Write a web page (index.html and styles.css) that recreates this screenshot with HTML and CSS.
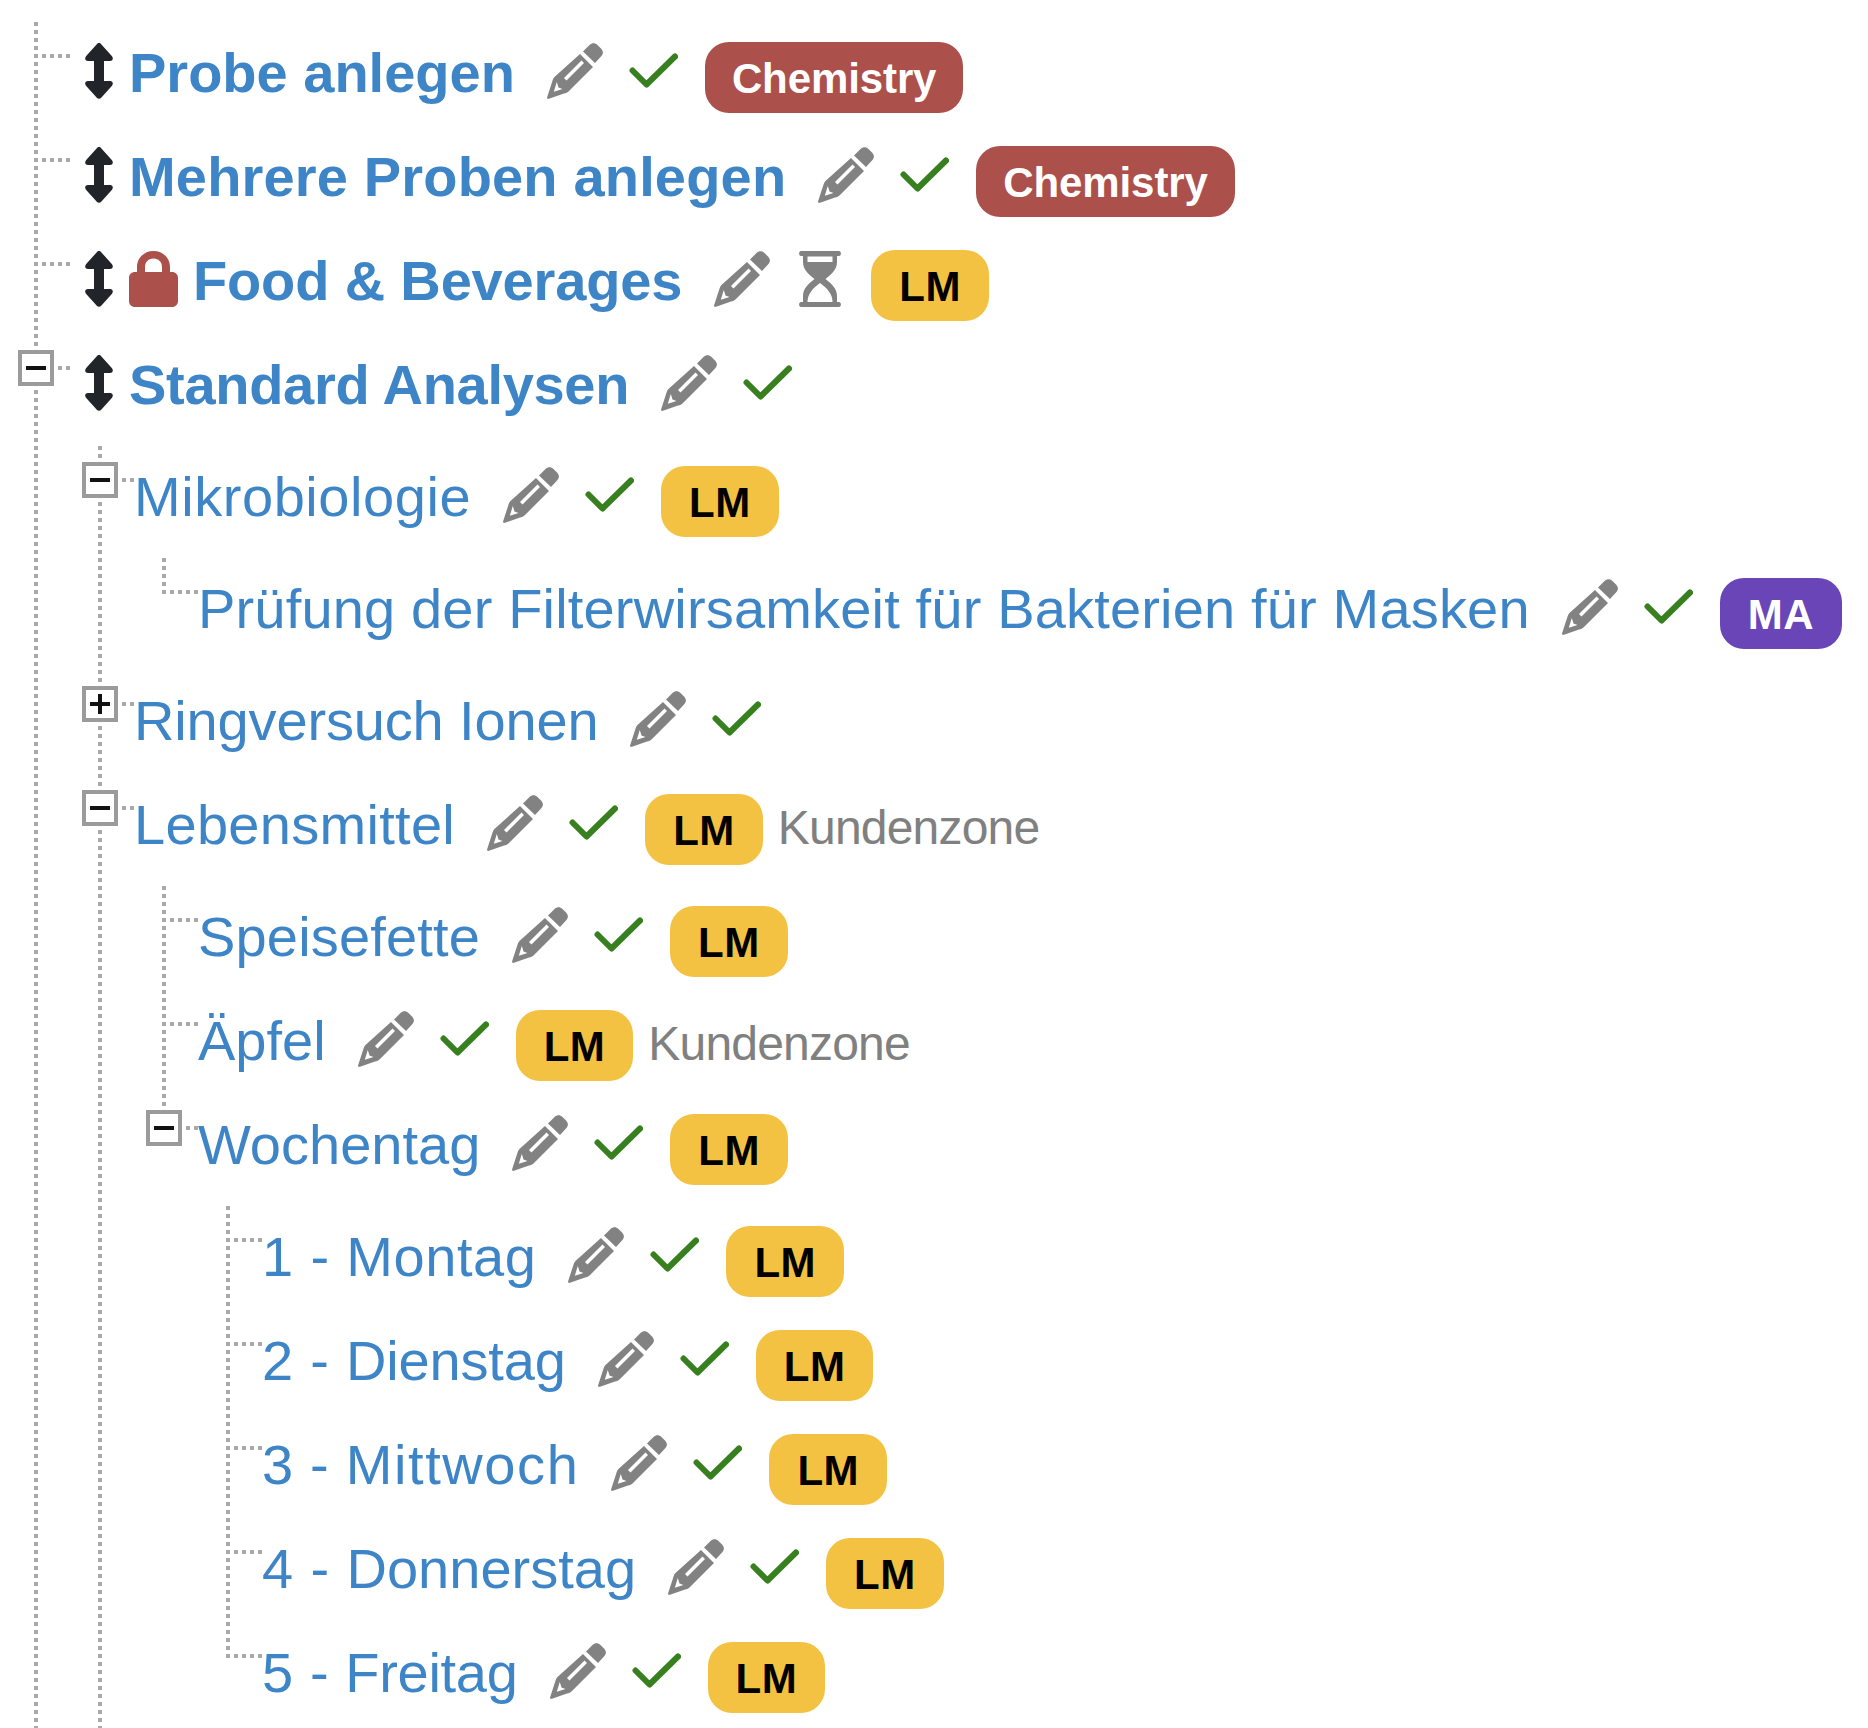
FILE: index.html
```html
<!DOCTYPE html>
<html lang="en">
<head>
  <meta charset="UTF-8" />
  <title>Analysen</title>
  <link rel="stylesheet" href="styles.css">
</head>
<body>
  <svg class="defs" aria-hidden="true">
    <symbol id="i-move" viewBox="0 0 28 56">
      <path d="M14 0C15 0 15.6.6 16.2 1.2L26.8 13C28.6 15 28 18 25 18H19V38H25C28 38 28.6 41 26.8 43L16.2 54.800C15 56.200 13 56.200 11.800 54.800L1.200 43C-.6 41 0 38 3 38H9V18H3C0 18-.6 15 1.200 13L11.800 1.200C12.400.6 13 0 14 0Z"/>
    </symbol>
    <symbol id="i-edit" viewBox="0 0 56 56">
      <path fill-rule="evenodd" d="M33 11 46 24 22 48C20.500 49.500 19 50 17 50.600L2 55.800C.5 56.300-.3 55.500.2 54L5.400 38C6 36 6.500 35 8 33.500ZM34.500 17.500 17 35 19.500 37.500 37 20ZM9.800 39 6.800 48.800 15.500 46 11.500 44.500Z"/>
      <path d="M36 8.500 42.500 2C45-.5 48-.5 50.500 2L54 5.500C56.500 8 56.500 11 54 13.500L48 20Z"/>
    </symbol>
    <symbol id="i-check" viewBox="0 0 49 35">
      <path fill="none" stroke="currentColor" stroke-width="6" stroke-linecap="round" stroke-linejoin="round" d="M3.500 17.500 17.500 31.500 46 3.500"/>
    </symbol>
    <symbol id="i-lock" viewBox="0 0 49 56">
      <path fill-rule="evenodd" d="M8 21V16C8 7 15 0 24.500 0S41 7 41 16V21H43C46.500 21 49 23.500 49 27V50C49 53.500 46.500 56 43 56H6C2.500 56 0 53.500 0 50V27C0 23.500 2.500 21 6 21ZM16 21H33V16C33 11 29.500 7.500 24.500 7.500S16 11 16 16Z"/>
    </symbol>
    <symbol id="i-wait" viewBox="0 0 42 56">
      <path fill-rule="evenodd" d="M2 0H40C42.500 0 42.500 5 40 5H38V11C38 18 33 23 26.500 28 33 33 38 38 38 45V51H40C42.500 51 42.500 56 40 56H2C-.5 56-.5 51 2 51H4V45C4 38 9 33 15.500 28 9 23 4 18 4 11V5H2C-.5 5-.5 0 2 0ZM8.500 5.500V11H33.500V5.500ZM21 32C14 37 8.500 43 8.500 51H33.500C33.500 43 28 37 21 32Z"/>
    </symbol>
  </svg>

  <ul class="tree">
    <li>
      <div class="row strong">
        <svg class="ic-move"><use href="#i-move"/></svg>
        <a class="title">Probe anlegen</a>
        <svg class="ic-edit"><use href="#i-edit"/></svg>
        <svg class="ic-check"><use href="#i-check"/></svg>
        <span class="badge chem">Chemistry</span>
      </div>
    </li>
    <li>
      <div class="row strong">
        <svg class="ic-move"><use href="#i-move"/></svg>
        <a class="title ls-p1">Mehrere Proben anlegen</a>
        <svg class="ic-edit"><use href="#i-edit"/></svg>
        <svg class="ic-check"><use href="#i-check"/></svg>
        <span class="badge chem">Chemistry</span>
      </div>
    </li>
    <li>
      <div class="row strong">
        <svg class="ic-move"><use href="#i-move"/></svg>
        <svg class="ic-lock"><use href="#i-lock"/></svg>
        <a class="title ls-m1">Food &amp; Beverages</a>
        <svg class="ic-edit"><use href="#i-edit"/></svg>
        <svg class="ic-wait"><use href="#i-wait"/></svg>
        <span class="badge lm">LM</span>
      </div>
    </li>
    <li>
      <span class="toggle minus"></span>
      <div class="row strong">
        <svg class="ic-move"><use href="#i-move"/></svg>
        <a class="title ls-m3">Standard Analysen</a>
        <svg class="ic-edit"><use href="#i-edit"/></svg>
        <svg class="ic-check"><use href="#i-check"/></svg>
      </div>
      <ul>
        <li>
          <span class="toggle minus"></span>
          <div class="row">
            <a class="title ls-p5">Mikrobiologie</a>
            <svg class="ic-edit"><use href="#i-edit"/></svg>
            <svg class="ic-check"><use href="#i-check"/></svg>
            <span class="badge lm">LM</span>
          </div>
          <ul>
            <li class="last">
              <div class="row">
                <a class="title ls-p1">Prüfung der Filterwirsamkeit für Bakterien für Masken</a>
                <svg class="ic-edit"><use href="#i-edit"/></svg>
                <svg class="ic-check"><use href="#i-check"/></svg>
                <span class="badge ma">MA</span>
              </div>
            </li>
          </ul>
        </li>
        <li>
          <span class="toggle plus"></span>
          <div class="row">
            <a class="title ls-m1">Ringversuch Ionen</a>
            <svg class="ic-edit"><use href="#i-edit"/></svg>
            <svg class="ic-check"><use href="#i-check"/></svg>
          </div>
        </li>
        <li>
          <span class="toggle minus"></span>
          <div class="row">
            <a class="title ls-p3">Lebensmittel</a>
            <svg class="ic-edit"><use href="#i-edit"/></svg>
            <svg class="ic-check"><use href="#i-check"/></svg>
            <span class="badge lm">LM</span>
            <span class="note">Kundenzone</span>
          </div>
          <ul>
            <li>
              <div class="row">
                <a class="title ls-p1">Speisefette</a>
                <svg class="ic-edit"><use href="#i-edit"/></svg>
                <svg class="ic-check"><use href="#i-check"/></svg>
                <span class="badge lm">LM</span>
              </div>
            </li>
            <li>
              <div class="row">
                <a class="title">Äpfel</a>
                <svg class="ic-edit"><use href="#i-edit"/></svg>
                <svg class="ic-check"><use href="#i-check"/></svg>
                <span class="badge lm">LM</span>
                <span class="note">Kundenzone</span>
              </div>
            </li>
            <li class="last">
              <span class="toggle minus"></span>
              <div class="row">
                <a class="title">Wochentag</a>
                <svg class="ic-edit"><use href="#i-edit"/></svg>
                <svg class="ic-check"><use href="#i-check"/></svg>
                <span class="badge lm">LM</span>
              </div>
              <ul>
                <li>
                  <div class="row">
                    <a class="title day mon">1 - Montag</a>
                    <svg class="ic-edit"><use href="#i-edit"/></svg>
                    <svg class="ic-check"><use href="#i-check"/></svg>
                    <span class="badge lm">LM</span>
                  </div>
                </li>
                <li>
                  <div class="row">
                    <a class="title day ls-m1">2 - Dienstag</a>
                    <svg class="ic-edit"><use href="#i-edit"/></svg>
                    <svg class="ic-check"><use href="#i-check"/></svg>
                    <span class="badge lm">LM</span>
                  </div>
                </li>
                <li>
                  <div class="row">
                    <a class="title day wed">3 - Mittwoch</a>
                    <svg class="ic-edit"><use href="#i-edit"/></svg>
                    <svg class="ic-check"><use href="#i-check"/></svg>
                    <span class="badge lm">LM</span>
                  </div>
                </li>
                <li>
                  <div class="row">
                    <a class="title day">4 - Donnerstag</a>
                    <svg class="ic-edit"><use href="#i-edit"/></svg>
                    <svg class="ic-check"><use href="#i-check"/></svg>
                    <span class="badge lm">LM</span>
                  </div>
                </li>
                <li class="last">
                  <div class="row">
                    <a class="title day ls-m3">5 - Freitag</a>
                    <svg class="ic-edit"><use href="#i-edit"/></svg>
                    <svg class="ic-check"><use href="#i-check"/></svg>
                    <span class="badge lm">LM</span>
                  </div>
                </li>
              </ul>
            </li>
          </ul>
        </li>
      </ul>
    </li>
  </ul>
</body>
</html>
```

FILE: styles.css
```css
html, body {
  margin: 0;
  height: 1728px;
  overflow: hidden;
  background: #fff;
  font-family: "Liberation Sans", Arial, sans-serif;
}

.defs {
  display: none;
}

ul {
  list-style: none;
  margin: 0;
  padding: 8px 0 8px 64px;
}

.tree {
  padding: 22px 0 0 0;
}

/* dotted connector: vertical part, then the stub to the row */
li {
  position: relative;
  background-image:
    repeating-linear-gradient(to bottom, #a9a9a9 0 4px, transparent 4px 8px),
    repeating-linear-gradient(to right, #a9a9a9 0 4px, transparent 4px 8px);
  background-size: 4px 100%, 36px 4px;
  background-position: 34px 0, 34px 32px;
  background-repeat: no-repeat;
}

li.last {
  background-size: 4px 36px, 36px 4px;
}

.row {
  display: flex;
  align-items: flex-start;
  height: 104px;
  padding-left: 70px;
  font-size: 56px;
  line-height: 101px;
  white-space: nowrap;
}

.row.strong {
  padding-left: 85px;
  font-weight: 700;
}

.title {
  color: #3d85c6;
}

.strong .title {
  margin-left: 1px;
}

.day { word-spacing: 1.8px; }
.ls-m3 { letter-spacing: -0.3px; }
.ls-m1 { letter-spacing: -0.15px; }
.ls-p1 { letter-spacing: 0.17px; }
.ls-p3 { letter-spacing: 0.3px; }
.ls-p5 { letter-spacing: 0.55px; }
.mon { letter-spacing: 0.55px; word-spacing: 0.6px; }
.wed { letter-spacing: 1.6px; word-spacing: -1.8px; }

.ic-move {
  width: 28px;
  height: 56px;
  margin: 21px 15px 0 0;
  fill: #212529;
}

.ic-lock {
  width: 49px;
  height: 56px;
  margin: 21px 14px 0 1px;
  fill: #ac504c;
}

.ic-edit {
  width: 56px;
  height: 56px;
  margin: 21px 26px 0 32px;
  fill: #828282;
}

.ic-check {
  width: 49px;
  height: 35px;
  margin: 31px 27px 0 0;
  color: #38801f;
}

.ic-wait {
  width: 42px;
  height: 56px;
  margin: 21px 30px 0 3px;
  fill: #828282;
}

.badge {
  margin-top: 20px;
  padding: 16px 28px 13px;
  border-radius: 24px;
  font-size: 42px;
  font-weight: 700;
  line-height: 42px;
}

.chem {
  padding-left: 27px;
  padding-right: 27px;
  background: #ac504c;
  color: #fff;
  letter-spacing: -0.1px;
}

.lm {
  background: #f4c242;
  color: #000;
  letter-spacing: 0.5px;
}

.ma {
  background: #6a45b8;
  color: #fff;
  letter-spacing: 0.5px;
}

.note {
  margin: 3px 0 0 15px;
  color: #808080;
  font-size: 48px;
  letter-spacing: -0.8px;
}

/* expand / collapse box sits on top of the connector */
.toggle {
  position: absolute;
  left: 18px;
  top: 16px;
  box-sizing: border-box;
  width: 36px;
  height: 36px;
  border: 4px solid #9b9b9b;
  background: #fff;
}

.toggle::before,
.plus::after {
  content: "";
  position: absolute;
  left: 4px;
  top: 12px;
  width: 20px;
  height: 4px;
  background: #111;
}

.plus::after {
  left: 12px;
  top: 4px;
  width: 4px;
  height: 20px;
}
```
